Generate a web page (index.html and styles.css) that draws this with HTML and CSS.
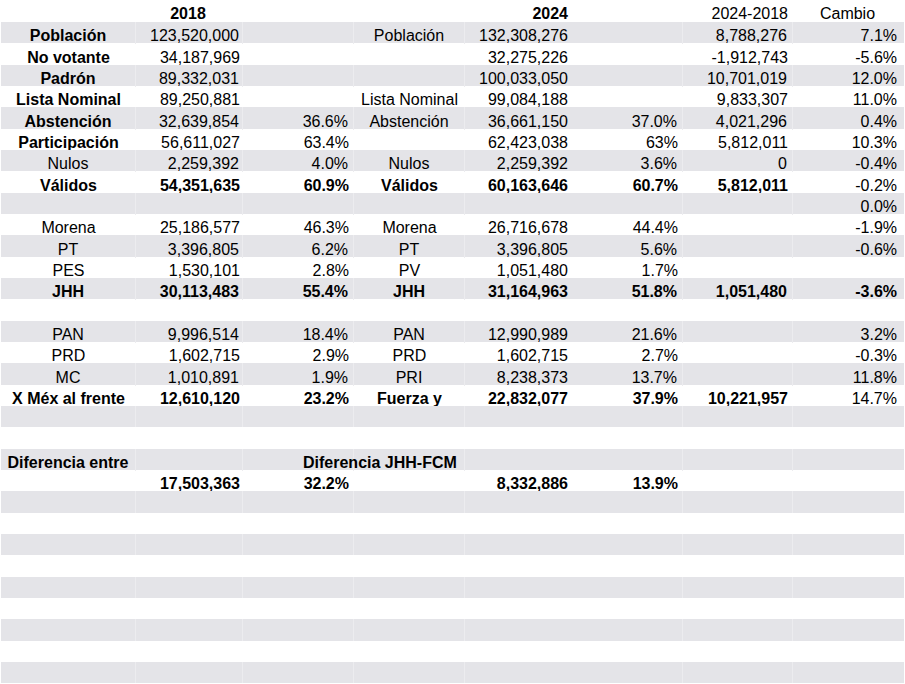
FILE: index.html
```html
<!DOCTYPE html>
<html lang="es">
<head>
<meta charset="utf-8">
<title>Comparativo 2018 - 2024</title>
<link rel="stylesheet" href="styles.css">
</head>
<body>
<div class="sheet">
  <div class="row head">
    <div class="c a"></div><div class="c b ctr bold">2018</div><div class="c cc"></div><div class="c d"></div>
    <div class="c e bold">2024</div><div class="c f"></div><div class="c g">2024-2018</div><div class="c h ctr">Cambio</div>
  </div>
  <div class="row gray">
    <div class="c a bold">Población</div><div class="c b">123,520,000</div><div class="c cc"></div><div class="c d">Población</div>
    <div class="c e">132,308,276</div><div class="c f"></div><div class="c g">8,788,276</div><div class="c h">7.1%</div>
  </div>
  <div class="row">
    <div class="c a bold">No votante</div><div class="c b">34,187,969</div><div class="c cc"></div><div class="c d"></div>
    <div class="c e">32,275,226</div><div class="c f"></div><div class="c g">-1,912,743</div><div class="c h">-5.6%</div>
  </div>
  <div class="row gray">
    <div class="c a bold">Padrón</div><div class="c b">89,332,031</div><div class="c cc"></div><div class="c d"></div>
    <div class="c e">100,033,050</div><div class="c f"></div><div class="c g">10,701,019</div><div class="c h">12.0%</div>
  </div>
  <div class="row">
    <div class="c a bold">Lista Nominal</div><div class="c b">89,250,881</div><div class="c cc"></div><div class="c d">Lista Nominal</div>
    <div class="c e">99,084,188</div><div class="c f"></div><div class="c g">9,833,307</div><div class="c h">11.0%</div>
  </div>
  <div class="row gray">
    <div class="c a bold">Abstención</div><div class="c b">32,639,854</div><div class="c cc">36.6%</div><div class="c d">Abstención</div>
    <div class="c e">36,661,150</div><div class="c f">37.0%</div><div class="c g">4,021,296</div><div class="c h">0.4%</div>
  </div>
  <div class="row">
    <div class="c a bold">Participación</div><div class="c b">56,611,027</div><div class="c cc">63.4%</div><div class="c d"></div>
    <div class="c e">62,423,038</div><div class="c f">63%</div><div class="c g">5,812,011</div><div class="c h">10.3%</div>
  </div>
  <div class="row gray">
    <div class="c a">Nulos</div><div class="c b">2,259,392</div><div class="c cc">4.0%</div><div class="c d">Nulos</div>
    <div class="c e">2,259,392</div><div class="c f">3.6%</div><div class="c g">0</div><div class="c h">-0.4%</div>
  </div>
  <div class="row">
    <div class="c a bold">Válidos</div><div class="c b bold">54,351,635</div><div class="c cc bold">60.9%</div><div class="c d bold">Válidos</div>
    <div class="c e bold">60,163,646</div><div class="c f bold">60.7%</div><div class="c g bold">5,812,011</div><div class="c h">-0.2%</div>
  </div>
  <div class="row gray">
    <div class="c a"></div><div class="c b"></div><div class="c cc"></div><div class="c d"></div>
    <div class="c e"></div><div class="c f"></div><div class="c g"></div><div class="c h">0.0%</div>
  </div>
  <div class="row">
    <div class="c a">Morena</div><div class="c b">25,186,577</div><div class="c cc">46.3%</div><div class="c d">Morena</div>
    <div class="c e">26,716,678</div><div class="c f">44.4%</div><div class="c g"></div><div class="c h">-1.9%</div>
  </div>
  <div class="row gray">
    <div class="c a">PT</div><div class="c b">3,396,805</div><div class="c cc">6.2%</div><div class="c d">PT</div>
    <div class="c e">3,396,805</div><div class="c f">5.6%</div><div class="c g"></div><div class="c h">-0.6%</div>
  </div>
  <div class="row">
    <div class="c a">PES</div><div class="c b">1,530,101</div><div class="c cc">2.8%</div><div class="c d">PV</div>
    <div class="c e">1,051,480</div><div class="c f">1.7%</div><div class="c g"></div><div class="c h"></div>
  </div>
  <div class="row gray">
    <div class="c a bold">JHH</div><div class="c b bold">30,113,483</div><div class="c cc bold">55.4%</div><div class="c d bold">JHH</div>
    <div class="c e bold">31,164,963</div><div class="c f bold">51.8%</div><div class="c g bold">1,051,480</div><div class="c h bold">-3.6%</div>
  </div>
  <div class="row">
    <div class="c a"></div><div class="c b"></div><div class="c cc"></div><div class="c d"></div>
    <div class="c e"></div><div class="c f"></div><div class="c g"></div><div class="c h"></div>
  </div>
  <div class="row gray">
    <div class="c a">PAN</div><div class="c b">9,996,514</div><div class="c cc">18.4%</div><div class="c d">PAN</div>
    <div class="c e">12,990,989</div><div class="c f">21.6%</div><div class="c g"></div><div class="c h">3.2%</div>
  </div>
  <div class="row">
    <div class="c a">PRD</div><div class="c b">1,602,715</div><div class="c cc">2.9%</div><div class="c d">PRD</div>
    <div class="c e">1,602,715</div><div class="c f">2.7%</div><div class="c g"></div><div class="c h">-0.3%</div>
  </div>
  <div class="row gray">
    <div class="c a">MC</div><div class="c b">1,010,891</div><div class="c cc">1.9%</div><div class="c d">PRI</div>
    <div class="c e">8,238,373</div><div class="c f">13.7%</div><div class="c g"></div><div class="c h">11.8%</div>
  </div>
  <div class="row">
    <div class="c a bold">X Méx al frente</div><div class="c b bold">12,610,120</div><div class="c cc bold">23.2%</div><div class="c d bold clip">Fuerza y</div>
    <div class="c e bold">22,832,077</div><div class="c f bold">37.9%</div><div class="c g bold">10,221,957</div><div class="c h">14.7%</div>
  </div>
  <div class="row gray">
    <div class="c a"></div><div class="c b"></div><div class="c cc"></div><div class="c d"></div>
    <div class="c e"></div><div class="c f"></div><div class="c g"></div><div class="c h"></div>
  </div>
  <div class="row">
    <div class="c a"></div><div class="c b"></div><div class="c cc"></div><div class="c d"></div>
    <div class="c e"></div><div class="c f"></div><div class="c g"></div><div class="c h"></div>
  </div>
  <div class="row gray">
    <div class="c a bold">Diferencia entre</div><div class="c b"></div><div class="c cc bold spill">Diferencia JHH-FCM</div><div class="c d"></div>
    <div class="c e"></div><div class="c f"></div><div class="c g"></div><div class="c h"></div>
  </div>
  <div class="row">
    <div class="c a"></div><div class="c b bold">17,503,363</div><div class="c cc bold">32.2%</div><div class="c d"></div>
    <div class="c e bold">8,332,886</div><div class="c f bold">13.9%</div><div class="c g"></div><div class="c h"></div>
  </div>
  <div class="row gray"><div class="c a"></div><div class="c b"></div><div class="c cc"></div><div class="c d"></div><div class="c e"></div><div class="c f"></div><div class="c g"></div><div class="c h"></div></div>
  <div class="row"><div class="c a"></div><div class="c b"></div><div class="c cc"></div><div class="c d"></div><div class="c e"></div><div class="c f"></div><div class="c g"></div><div class="c h"></div></div>
  <div class="row gray"><div class="c a"></div><div class="c b"></div><div class="c cc"></div><div class="c d"></div><div class="c e"></div><div class="c f"></div><div class="c g"></div><div class="c h"></div></div>
  <div class="row"><div class="c a"></div><div class="c b"></div><div class="c cc"></div><div class="c d"></div><div class="c e"></div><div class="c f"></div><div class="c g"></div><div class="c h"></div></div>
  <div class="row gray"><div class="c a"></div><div class="c b"></div><div class="c cc"></div><div class="c d"></div><div class="c e"></div><div class="c f"></div><div class="c g"></div><div class="c h"></div></div>
  <div class="row"><div class="c a"></div><div class="c b"></div><div class="c cc"></div><div class="c d"></div><div class="c e"></div><div class="c f"></div><div class="c g"></div><div class="c h"></div></div>
  <div class="row gray"><div class="c a"></div><div class="c b"></div><div class="c cc"></div><div class="c d"></div><div class="c e"></div><div class="c f"></div><div class="c g"></div><div class="c h"></div></div>
  <div class="row"><div class="c a"></div><div class="c b"></div><div class="c cc"></div><div class="c d"></div><div class="c e"></div><div class="c f"></div><div class="c g"></div><div class="c h"></div></div>
  <div class="row gray"><div class="c a"></div><div class="c b"></div><div class="c cc"></div><div class="c d"></div><div class="c e"></div><div class="c f"></div><div class="c g"></div><div class="c h"></div></div>
</div>
</body>
</html>
```

FILE: styles.css
```css
html, body {
  margin: 0;
  padding: 0;
  background: #ffffff;
}

body {
  font-family: "Liberation Sans", Arial, sans-serif;
  font-size: 16px;
  color: #000000;
  overflow: hidden;
}

.sheet {
  display: flex;
  flex-direction: column;
  width: 903px;
  margin-left: 1px;
}

.row {
  display: grid;
  grid-template-columns: 135px 107px 111px 111px 107px 111px 110px 111px;
  height: 21.333px;
}

.row.head {
  height: 22px;
}

.row.gray {
  background: #e4e4e8;
}

.c {
  box-sizing: border-box;
  padding-top: 6.3px;
  line-height: 16px;
  white-space: nowrap;
  text-align: right;
}

.row.gray .c {
  border-right: 1px solid #ececef;
}

.row.gray .c.h,
.row.gray .c.e {
  border-right: none;
}

.bold {
  font-weight: 700;
}

.ctr {
  text-align: center;
}

.a {
  text-align: center;
}

.d {
  text-align: center;
}

.b { padding-right: 3px; }
.cc { padding-right: 5px; }
.e { padding-right: 4px; }
.f { padding-right: 5px; }
.g { padding-right: 5px; }
.h { padding-right: 7px; }

.row.gray .c.e {
  padding-right: 4px;
}

.h.ctr {
  padding-right: 2px;
}

.clip {
  overflow: hidden;
}

.spill {
  text-align: left;
  padding-left: 60px;
  overflow: visible;
}
```
